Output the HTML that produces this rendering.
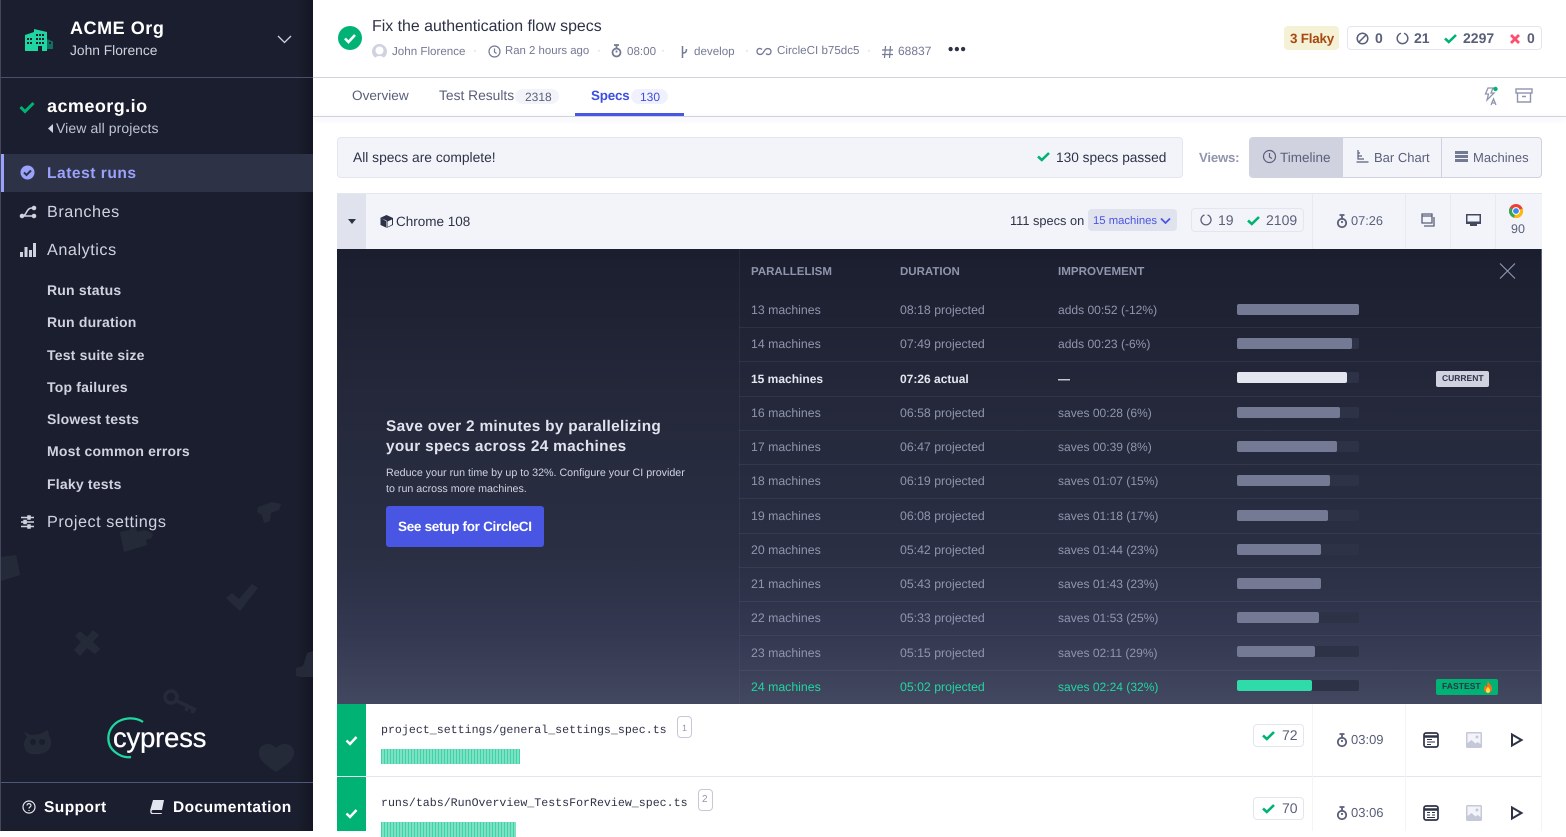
<!DOCTYPE html>
<html><head><meta charset="utf-8"><title>Cypress Dashboard</title>
<style>
html,body{margin:0;padding:0;width:1566px;height:831px;overflow:hidden;background:#fff;font-family:"Liberation Sans",sans-serif;text-rendering:geometricPrecision}
.t{position:absolute;white-space:nowrap;line-height:20px;height:20px}
.b{position:absolute;box-sizing:border-box}
svg{position:absolute;overflow:visible}
.nav{color:#d0d2e0;font-size:16.2px;letter-spacing:.55px;left:47px}
.sub{color:#d0d2e0;font-size:14px;font-weight:bold;letter-spacing:.2px;left:47px}
.meta{color:#747994;font-size:11.6px}
.rt{font-size:12.3px;color:#9095ad}
.ri{font-size:12.05px;color:#9095ad}
.rw{position:absolute;left:739px;width:802px;height:1px;background:rgba(120,125,160,.16)}
.bt{position:absolute;left:1237px;width:122px;height:11px;background:#2e3247;border-radius:2px}
.bf{position:absolute;left:0;top:0;height:11px;background:#747994;border-radius:2px}
.s{color:#5a5f7a;font-size:14px}
.ck{fill:none;stroke:#00b374;stroke-width:2.6}
.cur{color:#e4e6ef;font-weight:bold;font-size:12px}
.fast{color:#1fd6a0;font-size:12.3px}
</style></head><body>

<!-- SIDEBAR -->
<div class="b" style="left:0;top:0;width:313px;height:831px;background:#1b1e2e;border-left:1px solid #43465c"></div>
<div class="b" style="left:297px;top:0;width:16px;height:831px;background:linear-gradient(90deg,rgba(10,11,20,0),rgba(10,11,20,.4))"></div>
<div class="b" style="left:1px;top:77px;width:312px;height:1px;background:#4b4e6a"></div>

<svg style="left:0;top:0" width="313" height="831">
<g fill="#252a39">
<path d="M120 532l10-2 1-5c3-2 6 0 5 3l1 4 8-2c2 2 7 1 8 5 0 3-4 5-7 4l1 6-23 7z"/>
<path d="M1 557l15-2 4 20-19 6z"/>
<path d="M226 598l6-5 7 6 13-15 6 4-18 23z"/>
<path d="M75 636l5-5 7 6 6-7 6 5-6 7 7 7-5 5-8-6-7 8-6-6 7-8z"/>
<path d="M258 507l14-5 9 2-2 6-8 3-1 8-6 2-2-8-5-3z"/>
<path d="M296 668l7-2 4-13 6-2v26h-13l-4-1z"/>
<path d="M276 772c-8-6-18-11-17-21 1-7 11-10 17-3 6-7 17-4 18 3 1 10-10 15-18 21z"/>
<path d="M24 732l7 3 9-1 8-4 1 6c4 6 2 13-3 16-7 3-15 3-19 0-4-4-4-11 0-15z"/>
</g>
<g fill="none" stroke="#252a39" stroke-width="3.5"><circle cx="171" cy="697" r="6"/><path d="M177 701l19 9M188 706l-2 5M194 708l-2 5"/></g>
<circle cx="33" cy="742" r="3" fill="#1b1e2e"/><circle cx="42" cy="742" r="3" fill="#1b1e2e"/>
</svg>

<!-- org -->
<svg style="left:24px;top:28px" width="32" height="24" viewBox="0 0 32 24">
<path d="M1 7l9-3v19H1z" fill="#1fd6a0"/><path d="M10 1l13 3v19H10z" fill="#1fd6a0"/><path d="M23 11l6 2.500V21h-6z" fill="#0f6f62"/>
<g fill="#1b1e2e"><rect x="3" y="10" width="2" height="2"/><rect x="6" y="10" width="2" height="2"/><rect x="3" y="14" width="2" height="2"/><rect x="6" y="14" width="2" height="2"/><rect x="12" y="6" width="2" height="2"/><rect x="15" y="6" width="2" height="2"/><rect x="18" y="6" width="2" height="2"/><rect x="12" y="10" width="2" height="2"/><rect x="15" y="10" width="2" height="2"/><rect x="18" y="10" width="2" height="2"/><rect x="12" y="14" width="2" height="2"/><rect x="15" y="14" width="2" height="2"/><rect x="18" y="14" width="2" height="2"/><rect x="14" y="18" width="4" height="5"/><rect x="25" y="14" width="2" height="2"/></g>
</svg>
<div class="t" style="left:70px;top:18px;color:#fff;font-size:18px;font-weight:bold;letter-spacing:.55px">ACME Org</div>
<div class="t" style="left:70px;top:41px;color:#d0d2e0;font-size:13.8px">John Florence</div>
<svg style="left:277px;top:34px" width="15" height="10"><path d="M1 2l6.500 6.500L14 2" fill="none" stroke="#d0d2e0" stroke-width="1.300"/></svg>

<svg style="left:19px;top:100px" width="16" height="14"><path d="M1.500 7l4.500 4.500L14.500 3" fill="none" stroke="#00b374" stroke-width="3"/></svg>
<div class="t" style="left:47px;top:96px;color:#fff;font-size:18px;font-weight:bold;letter-spacing:.45px">acmeorg.io</div>
<svg style="left:48px;top:124px" width="5" height="9"><path d="M5 0v9L0 4.500z" fill="#d0d2e0"/></svg>
<div class="t" style="left:56px;top:118px;color:#bfc2d4;font-size:14px;letter-spacing:.1px">View all projects</div>

<div class="b" style="left:1px;top:154px;width:312px;height:38px;background:#2e3247;border-left:3px solid #9aa2fc"></div>
<svg style="left:20px;top:165px" width="15" height="15"><circle cx="7.500" cy="7.500" r="7" fill="#9aa2fc"/><path d="M4 7.500l2.500 2.500L11 5.500" fill="none" stroke="#2e3247" stroke-width="2"/></svg>
<div class="t" style="left:47px;top:164px;color:#9aa2fc;font-size:15.6px;font-weight:bold;letter-spacing:.5px">Latest runs</div>

<svg style="left:20px;top:204px" width="16" height="15" fill="none" stroke="#d0d2e0" stroke-width="1.600"><path d="M2 12c5 0 4-8 10-8h3M2 12h13"/><circle cx="2" cy="12" r="1.500" fill="#d0d2e0"/><circle cx="14" cy="12" r="1.500" fill="#d0d2e0"/><circle cx="14" cy="4" r="1.500" fill="#d0d2e0"/></svg>
<div class="t nav" style="top:202px">Branches</div>
<svg style="left:19px;top:242px" width="17" height="15" fill="#d0d2e0"><rect x="1" y="10" width="3" height="5"/><rect x="5.500" y="5" width="3" height="10"/><rect x="10" y="8" width="3" height="7"/><rect x="14" y="1" width="3" height="14"/></svg>
<div class="t nav" style="top:240px">Analytics</div>

<div class="t sub" style="top:280px">Run status</div>
<div class="t sub" style="top:312px">Run duration</div>
<div class="t sub" style="top:345px">Test suite size</div>
<div class="t sub" style="top:377px">Top failures</div>
<div class="t sub" style="top:409px">Slowest tests</div>
<div class="t sub" style="top:441px">Most common errors</div>
<div class="t sub" style="top:474px">Flaky tests</div>

<svg style="left:20px;top:515px" width="15" height="14" stroke="#d0d2e0" stroke-width="1.500" fill="#d0d2e0"><path d="M1 2.500h13M1 7h13M1 11.500h13"/><rect x="8" y="1" width="2" height="3"/><rect x="4" y="5.500" width="2" height="3"/><rect x="8" y="10" width="2" height="3"/></svg>
<div class="t nav" style="top:512px">Project settings</div>

<!-- logo -->
<svg style="left:100px;top:712px" width="60" height="52" fill="none"><path d="M43 10C36 5 24 5 16 11 6 19 6 33 15 40c5 4 10 6 16 5" stroke="#1fd6a0" stroke-width="2.300"/></svg>
<div class="t" style="left:113px;top:723px;color:#fff;font-size:27.300px;line-height:30px;height:30px;letter-spacing:-.1px;-webkit-text-stroke:.3px #fff">cypress</div>

<div class="b" style="left:1px;top:782px;width:312px;height:1px;background:#4f5878"></div>
<svg style="left:22px;top:800px" width="14" height="14" fill="none" stroke="#e4e6ef" stroke-width="1.200"><circle cx="7" cy="7" r="6"/><path d="M5 5.500c0-2.500 4-2.500 4 0 0 1.500-2 1.500-2 3M7 10v1"/></svg>
<div class="t" style="left:44px;top:798px;color:#fff;font-size:15.5px;font-weight:bold;letter-spacing:.45px">Support</div>
<svg style="left:150px;top:800px" width="15" height="14"><path d="M3 0h11l-2 10H3c-2 0-2 3 0 3h9l-.5 1H2C0 14 0 11 .5 9z" fill="#e4e6ef"/></svg>
<div class="t" style="left:173px;top:798px;color:#fff;font-size:15.5px;font-weight:bold;letter-spacing:.45px">Documentation</div>

<!-- HEADER -->
<svg style="left:338px;top:26px" width="24" height="24"><circle cx="12" cy="12" r="12" fill="#00b374"/><path d="M7 12.500l3.500 3.500L17 9" fill="none" stroke="#fff" stroke-width="2.600"/></svg>
<div class="t" style="left:372px;top:17px;color:#2e3247;font-size:15.900px">Fix the authentication flow specs</div>

<svg style="left:372px;top:44px" width="15" height="15"><circle cx="7.500" cy="7.500" r="7.500" fill="#d0d2e0"/><circle cx="7.500" cy="6.500" r="4" fill="#fff"/><path d="M3 15c0-4 9-4 9 0z" fill="#fff"/></svg>
<div class="t meta" style="left:392px;top:42px">John Florence</div>
<div class="t meta" style="left:473px;top:41px;color:#c5c8d8">·</div>
<svg style="left:488px;top:45px" width="13" height="13" fill="none" stroke="#747994" stroke-width="1.200"><circle cx="6.500" cy="6.500" r="5.500"/><path d="M6.500 3.500v3.500l2 1.500"/></svg>
<div class="t meta" style="left:505px;top:41px;font-size:11.400px">Ran 2 hours ago</div>
<div class="t meta" style="left:597px;top:41px;color:#c5c8d8">·</div>
<svg style="left:611px;top:44px" width="11" height="14" fill="none" stroke="#747994" stroke-width="1.800"><circle cx="5.500" cy="8.500" r="4"/><path d="M3 1h5M5.500 1v3M5.500 6.500v2"/></svg>
<div class="t meta" style="left:627px;top:42px">08:00</div>
<div class="t meta" style="left:661px;top:41px;color:#c5c8d8">·</div>
<svg style="left:680px;top:45px" width="9" height="14" fill="none" stroke="#747994" stroke-width="1.500"><path d="M2.500 1v12M2.500 8c3 0 4-1 4-4"/></svg>
<div class="t meta" style="left:694px;top:42px">develop</div>
<div class="t meta" style="left:745px;top:41px;color:#c5c8d8">·</div>
<svg style="left:756px;top:46px" width="16" height="11" fill="none" stroke="#747994" stroke-width="1.300"><path d="M6 3.500C4 1.500 1 2.500 1 5.500s4 4 6 1.500l2-3c2-2.500 6-1.500 6 1.500s-3 4-5 2"/></svg>
<div class="t meta" style="left:777px;top:41px">CircleCI b75dc5</div>
<div class="t meta" style="left:867px;top:41px;color:#c5c8d8">·</div>
<svg style="left:882px;top:46px" width="11" height="12" fill="none" stroke="#747994" stroke-width="1.200"><path d="M3.500 0L2.500 12M8.500 0L7.500 12M0 4h11M0 8.500h11"/></svg>
<div class="t meta" style="left:898px;top:41px;font-size:12px">68837</div>
<div class="t" style="left:948px;top:40px;color:#2e3247;font-size:15px;font-weight:bold;letter-spacing:1px">•••</div>

<div class="b" style="left:1284px;top:26px;width:55px;height:24px;background:#f5f1d6;border-radius:4px"></div>
<div class="t" style="left:1290px;top:29px;color:#a6490f;font-size:13.4px;font-weight:bold;letter-spacing:-.2px">3 Flaky</div>
<div class="b" style="left:1347px;top:26px;width:195px;height:24px;border:1px solid #e4e6ef;border-radius:4px;background:#fff"></div>
<svg style="left:1356px;top:32px" width="13" height="13" fill="none" stroke="#5a5f7a" stroke-width="1.500"><circle cx="6.500" cy="6.500" r="5.300"/><path d="M3 10l7-7"/></svg>
<div class="t" style="left:1375px;top:28px;color:#5a5f7a;font-size:14px;font-weight:bold">0</div>
<svg style="left:1396px;top:32px" width="13" height="13" fill="none" stroke="#5a5f7a" stroke-width="1.500"><path d="M5 1.300a5.300 5.300 0 1 0 3 0"/></svg>
<div class="t" style="left:1414px;top:28px;color:#5a5f7a;font-size:14px;font-weight:bold">21</div>
<svg style="left:1444px;top:33px" width="13" height="11"><path d="M1 5.500l3.800 3.500L12 2" class="ck"/></svg>
<div class="t" style="left:1463px;top:28px;color:#5a5f7a;font-size:14px;font-weight:bold">2297</div>
<svg style="left:1510px;top:34px" width="10" height="10"><path d="M1 1l8 8M9 1l-8 8" stroke="#ff4d6d" stroke-width="2.800"/></svg>
<div class="t" style="left:1527px;top:28px;color:#5a5f7a;font-size:14px;font-weight:bold">0</div>

<div class="b" style="left:313px;top:77px;width:1253px;height:1px;background:#d0d2e0"></div>

<!-- TABS -->
<div class="b" style="left:313px;top:116px;width:1253px;height:1px;background:#d0d2e0;box-shadow:0 2px 6px rgba(120,125,160,.3)"></div>
<div class="t" style="left:352px;top:86px;color:#5a5f7a;font-size:13.6px">Overview</div>
<div class="t" style="left:439px;top:86px;color:#5a5f7a;font-size:13.8px">Test Results</div>
<div class="b" style="left:515px;top:89px;width:44px;height:15px;border-radius:8px;background:#f3f4fa"></div>
<div class="t" style="left:525px;top:87px;color:#5a5f7a;font-size:12px">2318</div>
<div class="t" style="left:591px;top:86px;color:#3c4fe0;font-size:13.4px;font-weight:bold;letter-spacing:-.2px">Specs</div>
<div class="b" style="left:631px;top:89px;width:37px;height:15px;border-radius:8px;background:#f0f1fc"></div>
<div class="t" style="left:640px;top:87px;color:#3c4fe0;font-size:12px">130</div>
<div class="b" style="left:575px;top:113px;width:109px;height:3px;background:#4956e3"></div>

<svg style="left:1482px;top:86px" width="18" height="20" fill="none" stroke="#9095ad" stroke-width="1.300"><path d="M6 2h5L9 7h3l-7 7 1.500-6H3.500z"/><path d="M9 19l2.500-6 2.500 6M10 17h3"/><circle cx="13.500" cy="3" r="2.200" fill="#00b374" stroke="none"/></svg>
<svg style="left:1515px;top:88px" width="18" height="15" fill="none" stroke="#9095ad" stroke-width="1.400"><rect x="1" y="1" width="16" height="4"/><path d="M2.500 5v9h13V5M7 8.500h4"/></svg>

<!-- STATUS BAR -->
<div class="b" style="left:337px;top:137px;width:846px;height:41px;background:#f3f4fa;border:1px solid #e4e6ef;border-radius:4px"></div>
<div class="t" style="left:353px;top:148px;color:#2e3247;font-size:13.8px">All specs are complete!</div>
<svg style="left:1037px;top:151px" width="13" height="11"><path d="M1 5.500l3.800 3.500L12 2" class="ck"/></svg>
<div class="t" style="left:1056px;top:148px;color:#2e3247;font-size:13.7px">130 specs passed</div>
<div class="t" style="left:1199px;top:148px;color:#9095ad;font-size:13.2px;font-weight:bold;letter-spacing:-.2px">Views:</div>
<div class="b" style="left:1249px;top:137px;width:293px;height:41px;background:#f3f4fa;border:1px solid #d0d2e0;border-radius:4px"></div>
<div class="b" style="left:1250px;top:138px;width:93px;height:39px;background:#d0d2e0;border-radius:3px 0 0 3px"></div>
<div class="b" style="left:1441px;top:138px;width:1px;height:39px;background:#d0d2e0"></div>
<svg style="left:1262px;top:149px" width="15" height="15" fill="none" stroke="#5a5f7a" stroke-width="1.200"><circle cx="7.500" cy="7.500" r="6"/><path d="M7.500 4v4l2.500 1.500"/></svg>
<div class="t" style="left:1280px;top:148px;color:#5a5f7a;font-size:13.500px">Timeline</div>
<svg style="left:1356px;top:150px" width="13" height="14" fill="none" stroke="#5a5f7a" stroke-width="1.200"><path d="M2 0v3h2M2 3v3h4M2 6v3h6M0.500 12h12"/></svg>
<div class="t" style="left:1374px;top:148px;color:#5a5f7a;font-size:13px">Bar Chart</div>
<svg style="left:1455px;top:151px" width="13" height="11" fill="#747994"><rect width="13" height="3"/><rect y="4" width="13" height="3"/><rect y="8" width="13" height="3"/></svg>
<div class="t" style="left:1473px;top:148px;color:#5a5f7a;font-size:13px">Machines</div>

<!-- GROUP HEADER -->
<div class="b" style="left:337px;top:193px;width:1205px;height:56px;background:#f3f4fa;border-top:1px solid #e4e6ef"></div>
<div class="b" style="left:337px;top:194px;width:29px;height:55px;background:#e0e3ed"></div>
<svg style="left:347px;top:219px" width="10" height="6"><path d="M1 0h8L5 5z" fill="#2e3247"/></svg>
<svg style="left:380px;top:215px" width="13" height="13"><path d="M6.500 0L13 3v7l-6.500 3V5.500L0 3z" fill="#2e3247"/><path d="M.5 3v7L6 12.500V6z" fill="#2e3247"/><path d="M7.500 6.500l4.500-2v5L7.500 12z" fill="#f3f4fa"/></svg>
<div class="t" style="left:396px;top:212px;color:#2e3247;font-size:13.500px">Chrome 108</div>
<div class="t" style="left:1010px;top:211px;color:#2e3247;font-size:12.800px">111 specs on</div>
<div class="b" style="left:1088px;top:209px;width:89px;height:22px;background:#e0e3ed;border-radius:4px"></div>
<div class="t" style="left:1093px;top:211px;color:#4956e3;font-size:11.300px">15 machines</div>
<svg style="left:1160px;top:217px" width="11" height="8"><path d="M1 1.500l4.500 4.500L10 1.500" fill="none" stroke="#4956e3" stroke-width="1.800"/></svg>
<div class="b" style="left:1191px;top:208px;width:113px;height:24px;border:1px solid #e4e6ef;border-radius:4px"></div>
<svg style="left:1200px;top:214px" width="12" height="12" fill="none" stroke="#5a5f7a" stroke-width="1.300"><path d="M4.500 1a5 5 0 1 0 3 0"/></svg>
<div class="t" style="left:1218px;top:210px;color:#5a5f7a;font-size:14px">19</div>
<svg style="left:1247px;top:215px" width="13" height="11"><path d="M1 5.500l3.800 3.500L12 2" class="ck"/></svg>
<div class="t" style="left:1266px;top:210px;color:#5a5f7a;font-size:14px">2109</div>
<div class="b" style="left:1312px;top:194px;width:1px;height:55px;background:#e8e9f2"></div>
<div class="b" style="left:1405px;top:194px;width:1px;height:55px;background:#e8e9f2"></div>
<div class="b" style="left:1450px;top:194px;width:1px;height:55px;background:#e8e9f2"></div>
<div class="b" style="left:1495px;top:194px;width:1px;height:55px;background:#e8e9f2"></div>
<svg style="left:1336px;top:214px" width="12" height="15" fill="none" stroke="#5a5f7a" stroke-width="1.800"><circle cx="6" cy="9" r="4.200"/><path d="M3.500 1h5M6 1v3M6 7v2"/></svg>
<div class="t" style="left:1351px;top:211px;color:#5a5f7a;font-size:12.800px">07:26</div>
<svg style="left:1421px;top:213px" width="14" height="14" fill="none" stroke="#5a5f7a" stroke-width="1.300"><path d="M1 1h10v9H1zM1 3h10"/><path d="M13 4v9H3"/></svg>
<svg style="left:1466px;top:213px" width="15" height="14"><rect x="0" y="1" width="15" height="10" fill="#434861"/><rect x="1.500" y="2.500" width="12" height="6" fill="#f3f4fa"/><rect x="4" y="11" width="7" height="2" fill="#434861"/></svg>
<svg style="left:1509px;top:204px" width="14" height="14"><circle cx="7" cy="7" r="7" fill="#ea4335"/><path d="M7 7L1 3.500A7 7 0 0 0 5 13.700z" fill="#34a853"/><path d="M7 7l6.500-2.500A7 7 0 0 1 5 13.700z" fill="#fbbc05"/><circle cx="7" cy="7" r="3.400" fill="#4285f4" stroke="#fff"/></svg>
<div class="t" style="left:1511px;top:219px;color:#5a5f7a;font-size:12.500px">90</div>

<!-- PANEL -->
<div class="b" style="left:337px;top:249px;width:1205px;height:455px;background:linear-gradient(180deg,#1b1e2e 0%,#24283a 33%,#2b2f44 68%,#343851 85%,#434861 100%);border-right:1px solid #5a5f7a"></div>
<div class="b" style="left:739px;top:249px;width:1px;height:455px;background:rgba(120,125,160,.12)"></div>

<div class="t" style="left:386px;top:417px;color:#e0e3ed;font-size:15.400px;font-weight:bold;letter-spacing:.3px">Save over 2 minutes by parallelizing</div>
<div class="t" style="left:386px;top:437px;color:#e0e3ed;font-size:15.400px;font-weight:bold;letter-spacing:.3px">your specs across 24 machines</div>
<div class="t" style="left:386px;top:463px;color:#d0d2e0;font-size:10.700px">Reduce your run time by up to 32%. Configure your CI provider</div>
<div class="t" style="left:386px;top:479px;color:#d0d2e0;font-size:10.700px">to run across more machines.</div>
<div class="b" style="left:386px;top:506px;width:158px;height:41px;background:#4956e3;border-radius:3px"></div>
<div class="t" style="left:398px;top:517px;color:#fff;font-size:13.500px;font-weight:bold;letter-spacing:-.3px">See setup for CircleCI</div>

<div class="t" style="left:751px;top:262px;color:#9095ad;font-size:11.500px;font-weight:bold">PARALLELISM</div>
<div class="t" style="left:900px;top:262px;color:#9095ad;font-size:11.500px;font-weight:bold">DURATION</div>
<div class="t" style="left:1058px;top:262px;color:#9095ad;font-size:11.600px;font-weight:bold">IMPROVEMENT</div>
<svg style="left:1499px;top:263px" width="17" height="16"><path d="M1 .5l15 15M16 .5l-15 15" stroke="#9095ad" stroke-width="1.200"/></svg>

<div class="rw" style="top:327px"></div><div class="rw" style="top:361px"></div><div class="rw" style="top:396px"></div><div class="rw" style="top:430px"></div><div class="rw" style="top:464px"></div><div class="rw" style="top:498px"></div><div class="rw" style="top:533px"></div><div class="rw" style="top:567px"></div><div class="rw" style="top:601px"></div><div class="rw" style="top:635px"></div><div class="rw" style="top:670px"></div>

<div class="t rt" style="left:751px;top:300px">13 machines</div><div class="t rt" style="left:900px;top:300px">08:18 projected</div><div class="t ri" style="left:1058px;top:300px">adds 00:52 (-12%)</div>
<div class="bt" style="top:304px"><div class="bf" style="width:122px"></div></div>
<div class="t rt" style="left:751px;top:334px">14 machines</div><div class="t rt" style="left:900px;top:334px">07:49 projected</div><div class="t ri" style="left:1058px;top:334px">adds 00:23 (-6%)</div>
<div class="bt" style="top:338px"><div class="bf" style="width:115px"></div></div>
<div class="t cur" style="left:751px;top:369px">15 machines</div><div class="t cur" style="left:900px;top:369px">07:26 actual</div><div class="t cur" style="left:1058px;top:369px">—</div>
<div class="bt" style="top:372px"><div class="bf" style="width:110px;background:#e4e6ef"></div></div>
<div class="b" style="left:1436px;top:371px;width:53px;height:16px;background:#d0d2e0;border-radius:2px"></div>
<div class="t" style="left:1442px;top:368px;color:#2e3247;font-size:8.500px;font-weight:bold">CURRENT</div>
<div class="t rt" style="left:751px;top:403px">16 machines</div><div class="t rt" style="left:900px;top:403px">06:58 projected</div><div class="t ri" style="left:1058px;top:403px">saves 00:28 (6%)</div>
<div class="bt" style="top:407px"><div class="bf" style="width:103px"></div></div>
<div class="t rt" style="left:751px;top:437px">17 machines</div><div class="t rt" style="left:900px;top:437px">06:47 projected</div><div class="t ri" style="left:1058px;top:437px">saves 00:39 (8%)</div>
<div class="bt" style="top:441px"><div class="bf" style="width:100px"></div></div>
<div class="t rt" style="left:751px;top:471px">18 machines</div><div class="t rt" style="left:900px;top:471px">06:19 projected</div><div class="t ri" style="left:1058px;top:471px">saves 01:07 (15%)</div>
<div class="bt" style="top:475px"><div class="bf" style="width:93px"></div></div>
<div class="t rt" style="left:751px;top:506px">19 machines</div><div class="t rt" style="left:900px;top:506px">06:08 projected</div><div class="t ri" style="left:1058px;top:506px">saves 01:18 (17%)</div>
<div class="bt" style="top:510px"><div class="bf" style="width:91px"></div></div>
<div class="t rt" style="left:751px;top:540px">20 machines</div><div class="t rt" style="left:900px;top:540px">05:42 projected</div><div class="t ri" style="left:1058px;top:540px">saves 01:44 (23%)</div>
<div class="bt" style="top:544px"><div class="bf" style="width:84px"></div></div>
<div class="t rt" style="left:751px;top:574px">21 machines</div><div class="t rt" style="left:900px;top:574px">05:43 projected</div><div class="t ri" style="left:1058px;top:574px">saves 01:43 (23%)</div>
<div class="bt" style="top:578px"><div class="bf" style="width:84px"></div></div>
<div class="t rt" style="left:751px;top:608px">22 machines</div><div class="t rt" style="left:900px;top:608px">05:33 projected</div><div class="t ri" style="left:1058px;top:608px">saves 01:53 (25%)</div>
<div class="bt" style="top:612px"><div class="bf" style="width:82px"></div></div>
<div class="t rt" style="left:751px;top:643px">23 machines</div><div class="t rt" style="left:900px;top:643px">05:15 projected</div><div class="t ri" style="left:1058px;top:643px">saves 02:11 (29%)</div>
<div class="bt" style="top:646px"><div class="bf" style="width:78px"></div></div>
<div class="t fast" style="left:751px;top:677px">24 machines</div><div class="t fast" style="left:900px;top:677px">05:02 projected</div><div class="t fast" style="left:1058px;top:677px;font-size:12.05px">saves 02:24 (32%)</div>
<div class="bt" style="top:680px"><div class="bf" style="width:75px;background:#2fdba8"></div></div>
<div class="b" style="left:1436px;top:679px;width:62px;height:16px;background:#00b374;border-radius:2px"></div>
<div class="t" style="left:1442px;top:676px;color:#2e3247;font-size:8.600px;font-weight:bold">FASTEST</div>
<svg style="left:1483px;top:681px" width="10" height="12"><path d="M5 0c1 3 4 4 4 8 0 2-2 4-4 4S1 10 1 8c0-2 1-3 2-4 0 1 .5 2 1 2 .5-2 0-4 1-6z" fill="#f97316"/><path d="M5 6c1 1 2 2 2 3.500S6 12 5 12s-2-1-2-2.500S4 7 5 6z" fill="#fde047"/></svg>

<!-- SPEC ROWS -->
<div class="b" style="left:337px;top:704px;width:29px;height:127px;background:#00b374"></div>
<div class="b" style="left:337px;top:776px;width:1205px;height:1px;background:#e4e6ef"></div>
<div class="b" style="left:1312px;top:704px;width:1px;height:127px;background:#f3f4fa"></div>
<div class="b" style="left:1405px;top:704px;width:1px;height:127px;background:#f3f4fa"></div>
<div class="b" style="left:1541px;top:704px;width:1px;height:127px;background:#f3f4fa"></div>

<svg style="left:345px;top:735px" width="13" height="11"><path d="M1.500 5.500l3.500 3.500L11.500 2" fill="none" stroke="#fff" stroke-width="2.500"/></svg>
<div class="t" style="left:381px;top:721px;color:#2e3247;font-family:'Liberation Mono',monospace;font-size:11.620px">project_settings/general_settings_spec.ts</div>
<div class="b" style="left:677px;top:716px;width:15px;height:22px;border:1px solid #c5c8d8;border-radius:4px"></div>
<div class="t" style="left:682px;top:718px;color:#9095ad;font-size:9px">1</div>
<div class="b" style="left:381px;top:749px;width:139px;height:15px;background:repeating-linear-gradient(90deg,#3ad5a6 0,#3ad5a6 1px,#7fe0c4 1px,#7fe0c4 3px)"></div>
<div class="b" style="left:1253px;top:724px;width:51px;height:23px;border:1px solid #e4e6ef;border-radius:4px"></div>
<svg style="left:1262px;top:730px" width="13" height="11"><path d="M1 5.500l3.800 3.500L12 2" class="ck"/></svg>
<div class="t" style="left:1282px;top:725px"><span class="s">72</span></div>
<svg style="left:1336px;top:733px" width="12" height="15" fill="none" stroke="#5a5f7a" stroke-width="1.800"><circle cx="6" cy="9" r="4.200"/><path d="M3.500 1h5M6 1v3M6 7v2"/></svg>
<div class="t" style="left:1351px;top:730px;color:#5a5f7a;font-size:13px">03:09</div>
<svg style="left:1423px;top:732px" width="16" height="16" fill="none" stroke="#2e3247"><rect x="1" y="1" width="14" height="14" rx="2" stroke-width="1.700"/><path d="M1 4.500h14" stroke-width="2.500"/><path d="M4 7.500h5M4 10h8M4 12.500h4" stroke-width="1"/></svg>
<svg style="left:1466px;top:732px" width="16" height="16"><rect width="16" height="16" rx="1.500" fill="#c5c8d8"/><rect x="1.500" y="1.500" width="13" height="13" fill="#f3f4fa"/><path d="M1.500 14.500V11l4-3 4 3.500 2-1.500 3 2v2.500z" fill="#c5c8d8"/><circle cx="11" cy="5" r="1.500" fill="#c5c8d8"/></svg>
<svg style="left:1510px;top:733px" width="13" height="14"><path d="M2 1.500l9.500 5.500L2 12.500z" fill="none" stroke="#2e3247" stroke-width="2"/></svg>

<svg style="left:345px;top:808px" width="13" height="11"><path d="M1.500 5.500l3.500 3.500L11.500 2" fill="none" stroke="#fff" stroke-width="2.500"/></svg>
<div class="t" style="left:381px;top:794px;color:#2e3247;font-family:'Liberation Mono',monospace;font-size:11.620px">runs/tabs/RunOverview_TestsForReview_spec.ts</div>
<div class="b" style="left:698px;top:789px;width:15px;height:22px;border:1px solid #c5c8d8;border-radius:4px"></div>
<div class="t" style="left:702px;top:790px;color:#9095ad;font-size:10px">2</div>
<div class="b" style="left:381px;top:822px;width:135px;height:15px;background:repeating-linear-gradient(90deg,#3ad5a6 0,#3ad5a6 1px,#7fe0c4 1px,#7fe0c4 3px)"></div>
<div class="b" style="left:1253px;top:797px;width:51px;height:23px;border:1px solid #e4e6ef;border-radius:4px"></div>
<svg style="left:1262px;top:803px" width="13" height="11"><path d="M1 5.500l3.800 3.500L12 2" class="ck"/></svg>
<div class="t" style="left:1282px;top:798px"><span class="s">70</span></div>
<svg style="left:1336px;top:806px" width="12" height="15" fill="none" stroke="#5a5f7a" stroke-width="1.800"><circle cx="6" cy="9" r="4.200"/><path d="M3.500 1h5M6 1v3M6 7v2"/></svg>
<div class="t" style="left:1351px;top:803px;color:#5a5f7a;font-size:13px">03:06</div>
<svg style="left:1423px;top:805px" width="16" height="16" fill="none" stroke="#2e3247"><rect x="1" y="1" width="14" height="14" rx="2" stroke-width="1.700"/><path d="M1 4.500h14" stroke-width="2.500"/><path d="M4 7.500h3M9 7.500h3M4 10h3M9 10h3M4 12.500h8" stroke-width="1"/></svg>
<svg style="left:1466px;top:805px" width="16" height="16"><rect width="16" height="16" rx="1.500" fill="#c5c8d8"/><rect x="1.500" y="1.500" width="13" height="13" fill="#f3f4fa"/><path d="M1.500 14.500V11l4-3 4 3.500 2-1.500 3 2v2.500z" fill="#c5c8d8"/><circle cx="11" cy="5" r="1.500" fill="#c5c8d8"/></svg>
<svg style="left:1510px;top:806px" width="13" height="14"><path d="M2 1.500l9.500 5.500L2 12.500z" fill="none" stroke="#2e3247" stroke-width="2"/></svg>

</body></html>
